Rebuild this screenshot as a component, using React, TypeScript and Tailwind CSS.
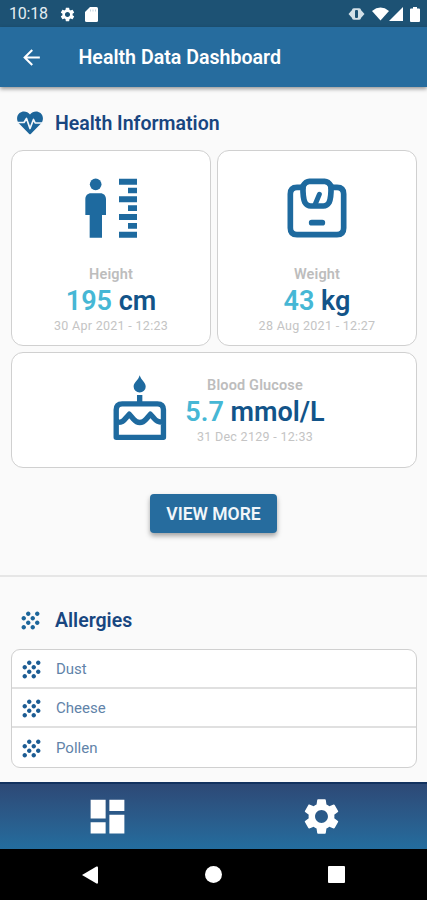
import type { ReactNode } from "react";
import { MdArrowBack, MdDashboard, MdGrain, MdSettings } from "react-icons/md";

const allergies = ["Dust", "Cheese", "Pollen"];

function HeartPulseIcon() {
  return (
    <svg viewBox="0 0 28 24" className="-ml-px h-6 w-7">
      <path
        d="M14 3.500C11.500 0 6.500-.5 3.500 2C.3 5 .4 9.500 3 12.500L13 22.700Q14 23.700 15 22.700L25 12.500C27.600 9.500 27.700 5 24.500 2C21.500-.5 16.500 0 14 3.500Z"
        fill="currentColor"
      />
      <path
        d="M1 11.500H8L10.500 7.500L14 17.500L17.500 8.500L19.200 12H27"
        fill="none"
        stroke="#f4f8fb"
        strokeWidth="1.700"
        strokeLinejoin="round"
      />
    </svg>
  );
}

function HeightIcon() {
  return (
    <svg viewBox="0 0 162 180" className="h-[60px] w-[54px]" fill="currentColor">
      <circle cx="35" cy="19" r="17.5" />
      <path d="M21 46h28c10 0 17 7 17 17v48H54v68H17v-68H4V63c0-10 7-17 17-17z" />
      <path d="M105 2h54v18h-54zM132 29h27v17h-27zM105 55h54v18h-54zM132 82h27v17h-27zM105 108h54v18h-54zM132 135h27v17h-27zM105 161h54v18h-54z" />
    </svg>
  );
}

function WeightIcon() {
  return (
    <svg
      viewBox="0 0 180 180"
      className="size-[60px]"
      fill="none"
      stroke="currentColor"
      strokeWidth="17"
      strokeLinecap="round"
      strokeLinejoin="round"
    >
      <path d="M48 28H30Q10 28 10 48V150Q10 170 30 170H150Q170 170 170 150V48Q170 28 150 28H132" />
      <path d="M67 10H113Q124 10 132 24Q133 60 126 74Q120 84 109 84H71Q60 84 54 74Q47 60 48 24Q56 10 67 10Z" />
      <path d="M85 78L97 49" strokeWidth="15" />
      <path d="M74 134H106" />
    </svg>
  );
}

function CakeIcon() {
  return (
    <svg viewBox="0 0 160 194" className="mr-[-1.5px] mb-[5px] ml-[1.5px] h-[65px] w-[54px]">
      <path d="M79 1C84 17 97 22 97 35A18 17 0 0 1 61 35C61 22 75 17 79 1Z" fill="currentColor" />
      <path
        d="M79 60V80M9 186V104Q9 86 27 86H132Q150 86 150 104V186ZM9 141C27 143 32 136 40 126L48 117L61 132C72 145 87 145 98 132L111 117L120 127C128 136 133 142 150 141"
        fill="none"
        stroke="currentColor"
        strokeWidth="16"
        strokeLinejoin="round"
      />
    </svg>
  );
}

type ReadingProps = {
  label: string;
  value: string;
  unit: string;
  date: string;
};

function Reading({ label, value, unit, date }: ReadingProps) {
  return (
    <div className="flex flex-col items-center pt-px whitespace-nowrap">
      <span className="text-[14.5px] leading-[18px] font-semibold tracking-[0.15px] text-[#bdbdbd]">{label}</span>
      <span className="text-[27px] leading-[34px] font-semibold text-[#125489]">
        <span className="text-[#46b7d5]">{value}</span> {unit}
      </span>
      <span className="-mt-px text-[12.5px] leading-[17px] tracking-[0.3px] text-[#c4c4c4]">{date}</span>
    </div>
  );
}

function SectionTitle({ icon, children }: { icon: ReactNode; children: ReactNode }) {
  return (
    <h2 className="flex h-7 items-center text-[19.5px] font-semibold text-[#184680]">
      <span className="ml-[16.5px] flex w-[38.5px] text-[#1c659a]">{icon}</span>
      <span className="pt-0.5">{children}</span>
    </h2>
  );
}

function StatusBar() {
  return (
    <div className="flex h-[27px] items-center bg-[#1d5274] pt-px pr-[7px] pl-[9px] text-white">
      <span className="w-[50px] text-[16px] tracking-[-0.2px] text-[#e3edf2]">10:18</span>
      <MdSettings size={17} />
      <svg viewBox="0 0 13 15" className="ml-[9px] h-[15px] w-[13px]" fill="currentColor">
        <path d="M5 0h6.5Q13 0 13 1.5v12Q13 15 11.5 15h-10Q0 15 0 13.5V5z" />
        <path d="M5.500 2.500v2M8 2.500v2M10.500 2.500v2" stroke="#c3d3dd" strokeWidth="1" />
      </svg>
      <svg viewBox="0 0 17 14" className="mr-px ml-auto h-[14px] w-[17px] text-[#d3e0e7]">
        <path d="M4.5 2.5L.5 7l4 4.5zM12.5 2.5l4 4.5-4 4.5z" fill="currentColor" />
        <rect x="4" y="1.3" width="9" height="11.4" rx="1.8" fill="currentColor" />
        <rect x="7" y="3" width="3" height="8" rx="1" fill="#1d5274" />
      </svg>
      <svg viewBox="0 0 18 14" className="ml-[6px] h-[14px] w-[17px]" fill="currentColor">
        <path d="M0 3.8Q9-3.5 18 3.8L9 14z" />
      </svg>
      <svg viewBox="0 0 14 14" className="size-[14px]" fill="currentColor">
        <path d="M14 0v14H0z" />
      </svg>
      <svg viewBox="0 0 10 15" className="ml-[7px] h-[15px] w-[10px]" fill="currentColor">
        <path d="M3 0h4v1.500h2q1 0 1 1V14q0 1-1 1H1q-1 0-1-1V2.500q0-1 1-1h2z" />
      </svg>
    </div>
  );
}

export default function App() {
  return (
    <div className="flex h-[900px] w-[427px] flex-col overflow-hidden bg-[#fafafa] font-['Roboto',sans-serif]">
      <StatusBar />
      <header className="z-10 flex h-[60px] shrink-0 items-center bg-[#266c9e] text-white shadow-[0_2px_4px_rgba(0,0,0,0.4)]">
        <MdArrowBack size={25} className="ml-[18.5px]" />
        <h1 className="ml-[35px] pt-px text-[19.6px] font-semibold">Health Data Dashboard</h1>
      </header>

      <main className="flex grow flex-col">
        <div className="mt-[22px]">
          <SectionTitle icon={<HeartPulseIcon />}>Health Information</SectionTitle>
        </div>
        <div className="mr-[10px] ml-[11px] mt-[13px] grid grid-cols-2 gap-1.5">
          <div className="flex h-[196px] flex-col items-center rounded-[12px] border-[1.5px] border-[#d0d0d0] bg-white pt-[27px] text-[#1e6a9f]">
            <div className="mb-[27px]">
              <HeightIcon />
            </div>
            <Reading label="Height" value="195" unit="cm" date="30 Apr 2021 - 12:23" />
          </div>
          <div className="flex h-[196px] flex-col items-center rounded-[12px] border-[1.5px] border-[#d0d0d0] bg-white pt-[27px] text-[#1e6a9f]">
            <div className="mb-[27px]">
              <WeightIcon />
            </div>
            <Reading label="Weight" value="43" unit="kg" date="28 Aug 2021 - 12:27" />
          </div>
          <div className="col-span-2 flex h-[116px] items-center justify-center gap-5 rounded-[12px] border-[1.5px] border-[#d0d0d0] bg-white pl-2 text-[#1e6a9f]">
            <CakeIcon />
            <Reading label="Blood Glucose" value="5.7" unit="mmol/L" date="31 Dec 2129 - 12:33" />
          </div>
        </div>

        <button
          type="button"
          className="mx-auto mt-[26px] h-[39px] w-[127px] rounded-[4px] bg-[#266c9e] pt-0.5 text-[17.5px] font-semibold text-[#f1f6fa] shadow-[0_3px_5px_rgba(0,0,0,0.35)]"
        >
          VIEW MORE
        </button>
        <hr className="mt-[42px] border-t-2 border-[#e6e6e6]" />

        <div className="mt-[29px]">
          <SectionTitle icon={<MdGrain size={27} />}>Allergies</SectionTitle>
        </div>
        <ul className="mr-[10px] ml-[11px] mt-[15px] divide-y-2 divide-[#e0e0e0] rounded-[9px] border-[1.5px] border-[#d0d0d0] bg-white">
          {allergies.map((name) => (
            <li key={name} className="flex h-[39px] items-center pt-0.5 pl-1.5 text-[15px] text-[#6183a9]">
              <MdGrain size={27} className="mr-[11px] text-[#1c5c93]" />
              {name}
            </li>
          ))}
        </ul>
      </main>

      <nav className="grid h-[67px] shrink-0 grid-cols-2 place-items-center border-t-2 border-[#12325f] bg-linear-to-b from-[#2d4976] to-[#236d9e] text-white">
        <MdDashboard size={45} className="ml-px" />
        <MdSettings size={43} className="ml-0.5" />
      </nav>
      <div className="flex h-[51px] shrink-0 items-center bg-black text-white">
        <svg viewBox="0 0 17 20" className="ml-[81px] h-5 w-[17px]" fill="currentColor">
          <path d="M1 10L15.500 1.500Q17 1 17 2.500V17.500Q17 19 15.500 18.500Z" />
        </svg>
        <span className="ml-[107px] size-[17px] rounded-full bg-white" />
        <span className="ml-[106px] size-[17px] rounded-[1px] bg-white" />
      </div>
    </div>
  );
}
